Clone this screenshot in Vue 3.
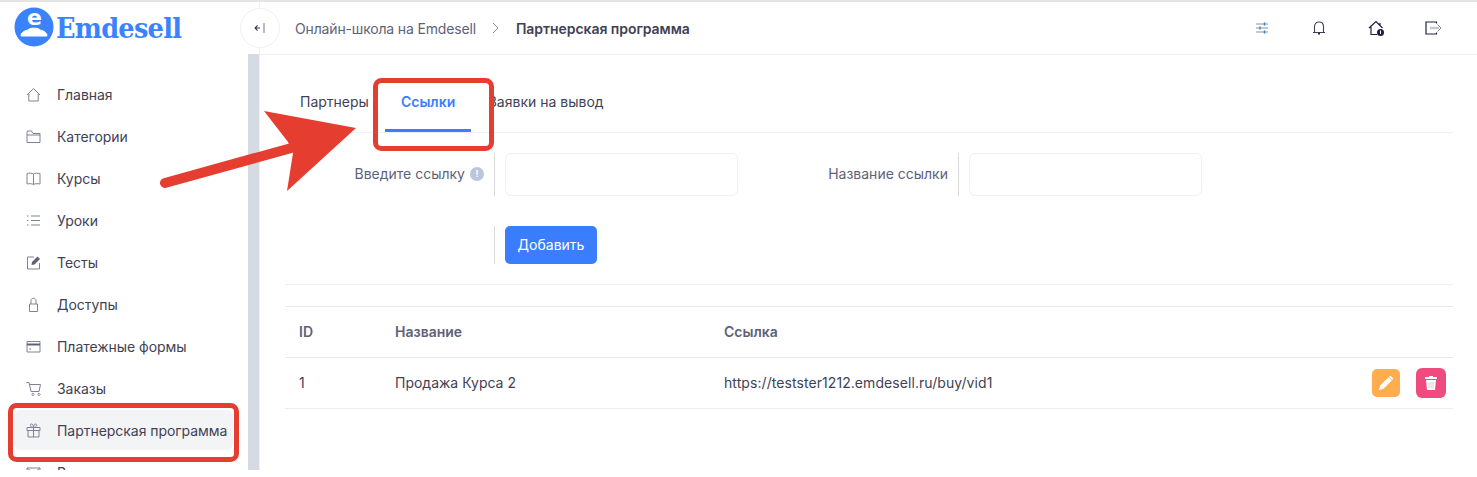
<script setup>
const menu = [
  { label: 'Главная', icon: 'home' },
  { label: 'Категории', icon: 'folder' },
  { label: 'Курсы', icon: 'book' },
  { label: 'Уроки', icon: 'list' },
  { label: 'Тесты', icon: 'edit' },
  { label: 'Доступы', icon: 'lock' },
  { label: 'Платежные формы', icon: 'card' },
  { label: 'Заказы', icon: 'cart' },
  { label: 'Партнерская программа', icon: 'gift', active: true },
  { label: 'Рассылки', icon: 'mail' },
]
const icons = {
  home: 'M1 8 L7.5 1.5 L14 8 M2.8 6.5 V14 H12.2 V6.5',
  folder: 'M1 3 V13.5 H14 V4.5 H7 L5.5 2 H1.5 Z M1 6 H14',
  book: 'M7.5 3 C6 2 3 2 1 2.5 V13 C3 12.5 6 12.5 7.5 13.5 C9 12.5 12 12.5 14 13 V2.5 C12 2 9 2 7.5 3 Z M7.5 3 V13.5',
  list: 'M5 3 H14 M5 7.5 H14 M5 12 H14 M1 3 H2.5 M1 7.5 H2.5 M1 12 H2.5',
  edit: 'M13.5 8 V14 H1.5 V2 H8',
  lock: 'M3.5 7 H11.5 V14.5 H3.5 Z M5 7 V3.5 C5 .5 10 .5 10 3.5 V7',
  card: 'M1 2.5 H14 V13 H1 Z M3 10 H5',
  cart: 'M.5 1.5 H3 L5 10.5 H13 L14.5 3.5 H3.5 M6 13.5 A1 1 0 1 0 6 13.4 M12 13.5 A1 1 0 1 0 12 13.4',
  gift: 'M1 4.5 H14 V7.5 H1 Z M2 7.5 V14 H13 V7.5 M7.5 4.5 V14 M7.5 4.5 C4 4.5 3.5 1 5.5 1 C7 1 7.5 3 7.5 4.5 C7.5 3 8 1 9.5 1 C11.5 1 11 4.5 7.5 4.5',
  mail: 'M1 3 H14 V12 H1 Z M1 3 L7.5 8 L14 3',
}
const fills = {
  edit: 'M5.5 10 L6 7 L11.5 1.5 L14 4 L8.5 9.5 Z',
  card: 'M1 4.5 H14 V6.5 H1 Z',
}
</script>

<template>
  <div class="page">
    <div class="topline"></div>
    <div class="shell">
      <aside class="side">
        <div class="brand">
          <svg class="brand-mark" width="40" height="40" viewBox="0 0 40 40">
            <circle cx="20" cy="20" r="19.5" fill="#3b82ff" />
            <path d="M7 29 C7 26 9.5 24 14 23 C15 20.5 25 20.5 26 23 C30.5 24 33 26 33 29 Z" fill="#fff" stroke="#fff" stroke-linejoin="round" />
          </svg>
          <span class="brand-e">e</span>
          <span class="brand-name">Emdesell</span>
        </div>
        <div class="side-body">
          <nav class="nav">
            <a v-for="m in menu" :key="m.label" class="nav-item" :class="{ active: m.active }">
              <svg class="nav-icon" viewBox="0 0 15 15" fill="none">
                <path :d="icons[m.icon]" stroke="#7e8299" stroke-width="1" />
                <path v-if="fills[m.icon]" :d="fills[m.icon]" fill="#5e6278" />
              </svg>
              <span>{{ m.label }}</span>
            </a>
          </nav>
          <div class="scrollbar"></div>
        </div>
      </aside>
      <main class="main">
        <header class="head">
          <div class="crumbs">
            <span class="crumb">Онлайн-школа на Emdesell</span>
            <svg width="9" height="12" viewBox="0 0 9 12" fill="none">
              <path d="M2 1 L7 6 L2 11" stroke="#7e8299" stroke-width="1" />
            </svg>
            <b>Партнерская программа</b>
          </div>
          <div class="tools">
            <svg class="nudge" width="14" height="12" viewBox="0 0 14 12" fill="none">
              <path d="M1 2 H13 M1 6 H13 M1 10 H13" stroke="#8b8fa3" stroke-width="1.2" />
              <path d="M9.5 .5 V3.5 M5 4.5 V7.5 M9.5 8.5 V11.5" stroke="#2d87c8" stroke-width="1.4" />
            </svg>
            <svg class="nudge" width="14" height="15" viewBox="0 0 14 15" fill="none">
              <path d="M1 12.5 H13 M2.5 12.5 V6.5 C2.5 .5 11.5 .5 11.5 6.5 V12.5" stroke="#3f4254" stroke-width="1.1" />
              <path d="M6 13 H8 V14.5 H6 Z" fill="#1e1e2d" />
            </svg>
            <svg width="17" height="16" viewBox="0 0 17 16" fill="none">
              <path d="M1 8 L8 1.5 L14.5 8 M3 7 V14.5 H9 M12 3 V6" stroke="#1e1e4d" stroke-width="1.2" />
              <circle cx="12.5" cy="12.5" r="3.5" fill="#1e1e4d" />
              <path d="M12.5 10.5 V14" stroke="#fff" stroke-width="1" />
            </svg>
            <svg width="17" height="14" viewBox="0 0 17 14" fill="none">
              <path d="M11.5 2.5 V1 H1 V13 H11.5 V11.5" stroke="#1e1e4d" stroke-width="1.2" />
              <path d="M5 7 H14" stroke="#c4c6d0" stroke-width="2.4" />
              <path d="M12.5 3.5 L16 7 L12.5 10.5" stroke="#7e8299" stroke-width="1" />
            </svg>
          </div>
          <button class="collapse">
            <svg width="12" height="10" viewBox="0 0 12 10" fill="none">
              <path d="M6 5 H1 M3.5 2.5 L1 5 L3.5 7.5" stroke="#3f4254" stroke-width="1.1" />
              <path d="M10 0 V10" stroke="#7e8299" stroke-width="1.1" />
            </svg>
          </button>
        </header>
        <section class="content">
          <div class="tabs">
            <span class="tab">Партнеры</span>
            <span class="tab current">Ссылки</span>
            <span class="tab last">Заявки на вывод</span>
          </div>
          <div class="form-row">
            <label class="lbl lbl-a">Введите ссылку <i class="hint">!</i></label>
            <div class="ctl"><div class="field"></div></div>
            <label class="lbl lbl-b">Название ссылки</label>
            <div class="ctl"><div class="field"></div></div>
          </div>
          <div class="btn-row">
            <div class="ctl"><button class="add">Добавить</button></div>
          </div>
          <div class="rule"></div>
          <table class="grid">
            <thead>
              <tr><th class="c1">ID</th><th class="c2">Название</th><th>Ссылка</th><th class="c4"></th></tr>
            </thead>
            <tbody>
              <tr>
                <td class="c1">1</td>
                <td class="c2">Продажа Курса 2</td>
                <td class="url">https://testster1212.emdesell.ru/buy/vid1</td>
                <td class="acts">
                  <span class="act edit">
                    <svg width="16" height="16" viewBox="0 0 16 16"><path d="M1 15 L2.2 10.5 L10.5 2.2 L13.8 5.5 L5.5 13.8 Z M11.4 1.4 C12 .8 12.6 .8 13.2 1.4 L14.6 2.8 C15.2 3.4 15.2 4 14.6 4.6 L14.2 5 L11 1.8 Z" fill="#fff" /></svg>
                  </span>
                  <span class="act del">
                    <svg width="14" height="16" viewBox="0 0 14 16"><path d="M1 2 H5 V1 H9 V2 H13 V4 H1 Z M2 5 H12 L11 15 H3 Z" fill="#fff" /><path d="M5 7 V13 M7 7 V13 M9 7 V13" stroke="#f7b9c9" stroke-width=".8" /></svg>
                  </span>
                </td>
              </tr>
            </tbody>
          </table>
        </section>
      </main>
    </div>
    <svg class="marks" width="1477" height="477" viewBox="0 0 1477 477" fill="none">
      <rect x="375.5" y="80.5" width="116" height="68" rx="6" stroke="#e53e30" stroke-width="5" />
      <rect x="10.5" y="405.5" width="226" height="54" rx="6" stroke="#e53e30" stroke-width="5" />
      <path d="M165 183 L295 147" stroke="#e53e30" stroke-width="10" stroke-linecap="round" />
      <path d="M356 128 L264 111 L288 142 L293 153 L287 191 Z" fill="#e53e30" />
    </svg>
  </div>
</template>

<style>
html, body { margin: 0; background: #fff; }
</style>

<style scoped>
.page {
  position: relative;
  width: 1477px;
  height: 477px;
  overflow: hidden;
  background: #fff;
  font-family: Inter, "Noto Sans", sans-serif;
  font-size: 14px;
  color: #3f4254;
}
.topline { height: 2px; background: #e4e4e4; }
.shell { display: flex; height: 468px; overflow: hidden; }
.side { width: 259px; flex: none; display: flex; flex-direction: column; }
.brand {
  position: relative;
  height: 52px;
  display: flex;
  align-items: center;
  padding-left: 14px;
  box-sizing: border-box;
  gap: 3px;
}
.brand-mark { flex: none; margin-top: -2px; }
.brand-e {
  position: absolute;
  left: 27px;
  top: 3px;
  color: #fff;
  font: bold 22px/26px "DejaVu Sans", sans-serif;
}
.brand-name {
  font-family: "DejaVu Serif Condensed", "DejaVu Serif", serif;
  font-stretch: condensed;
  font-weight: bold;
  font-size: 28.5px;
  line-height: 34px;
  color: #3b82ff;
  letter-spacing: -.75px;
  margin-left: -1px;
}
.side-body { flex: 1; display: flex; min-height: 0; overflow: hidden; }
.nav { width: 248px; padding: 20px 15px 0 14px; box-sizing: border-box; flex: none; }
.nav-item {
  display: flex;
  align-items: center;
  height: 40px;
  margin-bottom: 2px;
  padding-left: 12px;
  border-radius: 6px;
  color: #3f4254;
  white-space: nowrap;
  gap: 16px;
  letter-spacing: -.04px;
}
.nav-icon { flex: none; width: 15px; height: 15px; }
.nav-item.active { background: #f3f4f6; }
.scrollbar { width: 11px; background: #d6dae3; }
.main { flex: 1; min-width: 0; border-left: 1px solid #eff0f6; box-sizing: border-box; }
.head {
  position: relative;
  height: 53px;
  box-sizing: border-box;
  border-bottom: 1px solid #eff0f6;
  display: flex;
  align-items: center;
  justify-content: space-between;
  padding: 0 15px 0 36px;
  margin-left: -1px;
}
.crumbs { display: flex; align-items: center; gap: 15px; color: #5e6278; font-size: 14px; }
.crumb { letter-spacing: -.16px; }
.crumbs b { color: #3f4254; font-weight: 600; margin-left: 1px; letter-spacing: -.05px; }
.tools { display: grid; grid-template-columns: repeat(4, 57px); justify-items: center; align-items: center; margin-top: -1px; }
.nudge { margin-right: 2px; }
.collapse {
  position: absolute;
  left: -19px;
  top: 6px;
  width: 40px;
  height: 40px;
  border: 1px solid #eff0f6;
  border-radius: 50%;
  background: #fff;
  padding: 0;
  display: flex;
  align-items: center;
  justify-content: center;
}
.content { padding: 0 24px 0 25px; }
.tabs { display: flex; height: 78px; border-bottom: 1px solid #eff0f6; box-sizing: border-box; }
.tab {
  height: 78px;
  box-sizing: border-box;
  padding: 38px 16px 0;
  line-height: 17px;
  white-space: nowrap;
  border-bottom: 3px solid transparent;
}
.tab:first-child { padding-left: 15px; }
.tab.last { padding-left: 17px; }
.tab.current { color: #3b7dff; font-weight: 600; border-bottom-color: #3b7dff; margin-top: -1px; padding-top: 39px; }
.form-row { display: flex; align-items: stretch; margin-top: 20px; height: 43px; }
.lbl { display: flex; align-items: center; justify-content: flex-end; white-space: nowrap; color: #5e6278; height: 43px; margin-top: -1px; }
.lbl-a { width: 209px; padding-right: 10px; box-sizing: border-box; }
.lbl-b { width: 200px; padding-right: 10px; box-sizing: border-box; margin-left: 20px; }
.hint {
  width: 14px;
  height: 14px;
  margin-left: 5px;
  border-radius: 50%;
  background: #bcc5dc;
  color: #fff;
  font: bold 9px/14px Inter, sans-serif;
  text-align: center;
  flex: none;
}
.ctl { border-left: 1px solid #d9d9d9; padding-left: 10px; height: 43px; box-sizing: border-box; }
.field { width: 233px; height: 43px; box-sizing: border-box; border: 1px solid #eff0f6; border-radius: 6px; background: #fff; }
.btn-row { margin: 30px 0 0 209px; height: 38px; }
.btn-row .ctl { height: 38px; }
.add {
  width: 92px;
  height: 38px;
  border: 0;
  border-radius: 5px;
  background: #3b7dff;
  color: #fff;
  font: 14px Inter, sans-serif;
  padding: 0 0 2px;
}
.rule { margin-top: 20px; height: 1px; background: #eff0f6; }
.grid { width: 100%; margin-top: 21px; border-collapse: collapse; table-layout: fixed; border-top: 1px solid #e8e9ef; }
.grid th {
  height: 48px;
  padding: 0 0 2px;
  text-align: left;
  font-weight: 600;
  color: #5e6278;
  border-bottom: 1px solid #e8e9ef;
}
.grid td { height: 48px; padding: 0 0 2px; border-bottom: 1px solid #eceef2; color: #3f4254; }
.grid .c1 { width: 110px; padding-left: 14px; box-sizing: border-box; }
.c2 { width: 329px; }
.c4 { width: 200px; }
.url { letter-spacing: .07px; }
.grid td.acts { text-align: right; padding: 0 7px 0 0; }
.act { display: inline-flex; align-items: center; justify-content: center; vertical-align: middle; }
.edit { width: 28px; height: 28px; background: #ffad4f; border-radius: 5px; margin-right: 16px; }
.del { width: 30px; height: 30px; background: #ef4b7e; border-radius: 6px; }
.marks { position: absolute; left: 0; top: 0; pointer-events: none; }
</style>
